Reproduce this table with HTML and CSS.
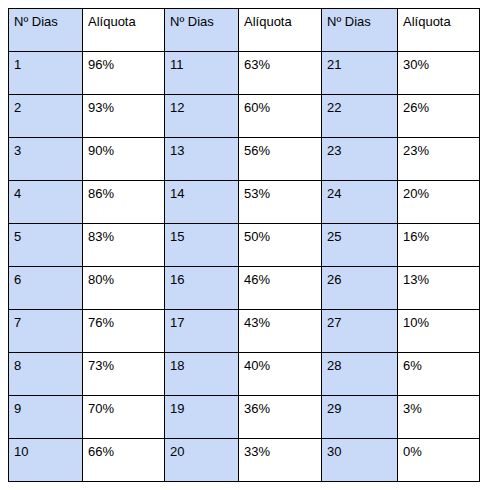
FILE: index.html
```html
<!DOCTYPE html>
<html>
<head>
<meta charset="utf-8">
<link rel="stylesheet" href="styles.css">
</head>
<body>
<table class="rates">
<colgroup>
<col class="c1"><col class="c2"><col class="c3"><col class="c4"><col class="c5"><col class="c6">
</colgroup>
<tr><td class="days">Nº Dias</td><td>Alíquota</td><td class="days">Nº Dias</td><td>Alíquota</td><td class="days">Nº Dias</td><td>Alíquota</td></tr>
<tr><td class="days">1</td><td>96%</td><td class="days">11</td><td>63%</td><td class="days">21</td><td>30%</td></tr>
<tr><td class="days">2</td><td>93%</td><td class="days">12</td><td>60%</td><td class="days">22</td><td>26%</td></tr>
<tr><td class="days">3</td><td>90%</td><td class="days">13</td><td>56%</td><td class="days">23</td><td>23%</td></tr>
<tr><td class="days">4</td><td>86%</td><td class="days">14</td><td>53%</td><td class="days">24</td><td>20%</td></tr>
<tr><td class="days">5</td><td>83%</td><td class="days">15</td><td>50%</td><td class="days">25</td><td>16%</td></tr>
<tr><td class="days">6</td><td>80%</td><td class="days">16</td><td>46%</td><td class="days">26</td><td>13%</td></tr>
<tr><td class="days">7</td><td>76%</td><td class="days">17</td><td>43%</td><td class="days">27</td><td>10%</td></tr>
<tr><td class="days">8</td><td>73%</td><td class="days">18</td><td>40%</td><td class="days">28</td><td>6%</td></tr>
<tr><td class="days">9</td><td>70%</td><td class="days">19</td><td>36%</td><td class="days">29</td><td>3%</td></tr>
<tr><td class="days">10</td><td>66%</td><td class="days">20</td><td>33%</td><td class="days">30</td><td>0%</td></tr>
</table>
</body>
</html>
```
FILE: styles.css
```css
html, body {
  margin: 0;
  padding: 0;
  background: #ffffff;
}
body {
  padding: 8px;
  font-family: "Liberation Sans", Arial, sans-serif;
  font-size: 13px;
  color: #000000;
}
.rates {
  table-layout: fixed;
  border-collapse: separate;
  border-spacing: 1px;
  background: #000000;
  width: 472px;
}
.c1 { width: 73px; }
.c2 { width: 81px; }
.c3 { width: 73px; }
.c4 { width: 82px; }
.c5 { width: 75px; }
.c6 { width: 81px; }
.rates td {
  box-sizing: border-box;
  height: 42px;
  padding: 5px 5px 0 5px;
  vertical-align: top;
  background: #ffffff;
  line-height: 15px;
  white-space: nowrap;
}
.rates td.days {
  background: #c9daf8;
}
```
